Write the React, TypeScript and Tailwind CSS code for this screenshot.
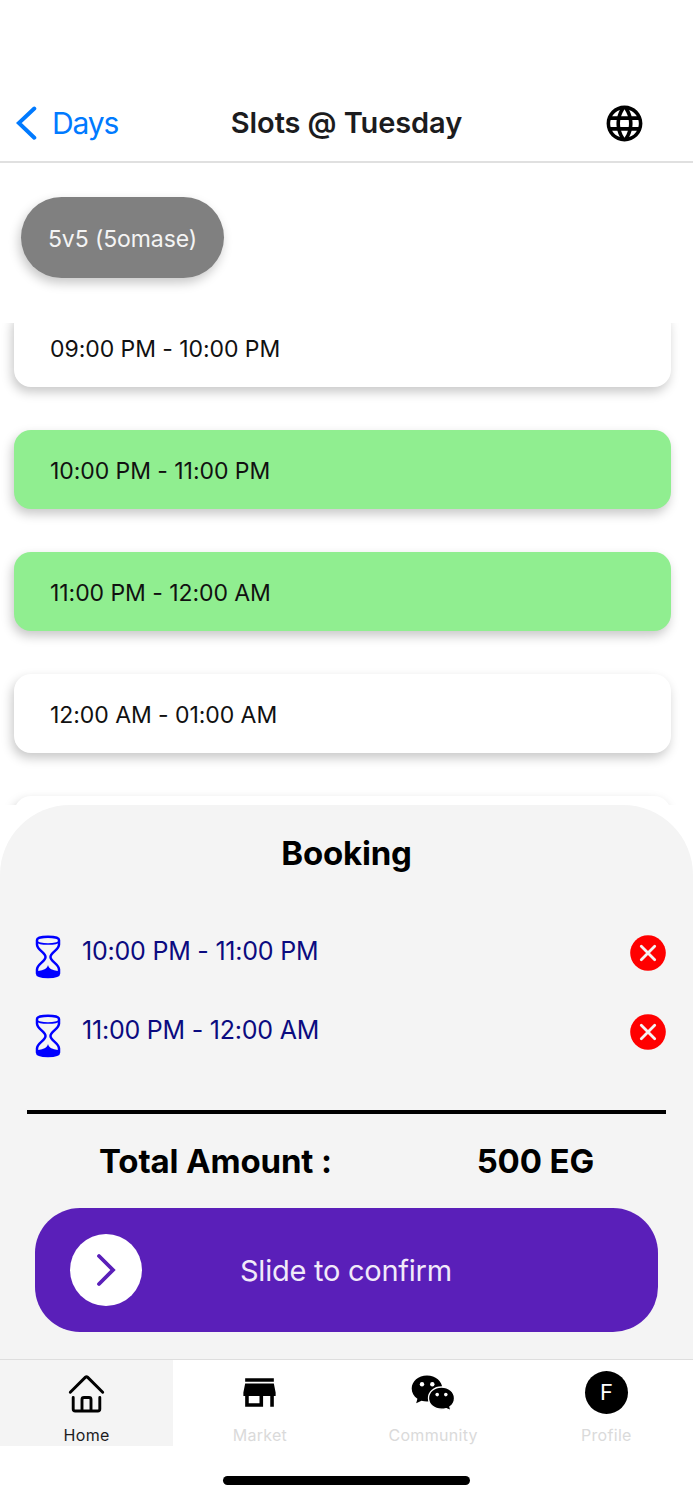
import React from "react";
import { MdLanguage, MdStore } from "react-icons/md";

type Slot = {
    label: string;
    selected: boolean;
};

const slots: Slot[] = [
    { label: "09:00 PM - 10:00 PM", selected: false },
    { label: "10:00 PM - 11:00 PM", selected: true },
    { label: "11:00 PM - 12:00 AM", selected: true },
    { label: "12:00 AM - 01:00 AM", selected: false },
    { label: "", selected: false },
];

const HourglassIcon = () => (
    <svg width="28" height="44" viewBox="0 0 28 44" fill="none">
        <path
            d="M3 5C3 .8 25 .8 25 5V9.500c0 5.500-8.500 8-8.500 12.500s8.500 7 8.500 12.500v4c0 4.700-22 4.700-22 0v-4c0-5.500 8.500-8 8.500-12.500S3 15 3 9.500Z"
            stroke="#0000ff"
            strokeWidth="2.500"
            strokeLinejoin="round"
        />
        <path d="M3 6.500C5 9.800 23 9.800 25 6.500" stroke="#0000ff" strokeWidth="1.600" />
        <path
            d="M14 30c.7 3.300 3 4 6 5.300l5 1v2.200c0 4.200-22 4.200-22 0v-2.200l5-1c3-1.300 5.300-2 6-5.300Z"
            fill="#0000ff"
        />
    </svg>
);

const RemoveIcon = () => (
    <svg width="36" height="36" viewBox="0 0 36 36" fill="none">
        <circle cx="18" cy="18" r="17.800" fill="#ff0000" />
        <path
            d="m11.300 11.300 13.400 13.400m0-13.400L11.300 24.700"
            stroke="#f4f4f4"
            strokeWidth="2.800"
            strokeLinecap="round"
        />
    </svg>
);

const HomeIcon = () => (
    <svg
        width="38"
        height="40"
        viewBox="0 0 38 40"
        fill="none"
        stroke="#000"
        strokeWidth="2.900"
        strokeLinecap="round"
        strokeLinejoin="round"
    >
        <path d="M2.300 19.300 17.500 4.100q1-.9 2 0l15.200 15.200" />
        <path d="M5.200 24.500V36q0 2 2 2h22.600q2 0 2-2V24.500" />
        <path d="M14 37.500v-11q0-2 2-2h5q2 0 2 2v11" />
    </svg>
);

const ChatIcon = () => (
    <svg width="44" height="36" viewBox="0 0 44 36">
        <path
            d="M16 .5C7.300.5.7 6.300.7 13.500c0 4.200 2.100 7.800 5.700 10.200L5.200 28.200l5.300-2.500c1.700.5 3.600.7 5.500.7 8.500 0 15.300-5.700 15.300-12.900S24.500.5 16 .5Z"
            fill="#000"
        />
        <path
            d="M30.500 12c7.200 0 13 4.900 13 11.200 0 3.500-1.700 6.500-4.600 8.600l1 3.900-4.600-2.100c-1.500.4-3.100.6-4.800.6-7.300 0-13-4.800-13-11S23.200 12 30.500 12Z"
            fill="#000"
            stroke="#fff"
            strokeWidth="1.300"
        />
        <circle cx="11" cy="9.300" r="2.200" fill="#fff" />
        <circle cx="21.300" cy="9.300" r="2.200" fill="#fff" />
        <circle cx="26.200" cy="19.600" r="1.800" fill="#fff" />
        <circle cx="34.800" cy="19.600" r="1.800" fill="#fff" />
    </svg>
);

const Header = () => (
    <header className="h-[163px] shrink-0 pt-[84px] border-b-2 border-[#e0e0e0] grid grid-cols-3">
        <button className="h-[78px] pl-4 flex items-center text-[#007aff] text-[30px]">
            <svg width="22" height="36" viewBox="0 0 22 36" fill="none">
                <path
                    d="M18.300 3.500 2.800 18l15.500 14.700"
                    stroke="#007aff"
                    strokeWidth="4"
                    strokeLinecap="round"
                />
            </svg>
            <span className="ml-[14px] tracking-[-1.1px]">Days</span>
        </button>
        <h1 className="h-[78px] flex items-center justify-center whitespace-nowrap text-[29px] font-semibold tracking-[-0.1px] text-[#1c1c1e]">
            Slots @ Tuesday
        </h1>
        <div className="h-[78px] pr-[47px] flex items-center justify-end">
            <MdLanguage size={43} color="#000" />
        </div>
    </header>
);

const SlotCard = ({ label, selected }: Slot) => (
    <div
        className={`h-[79px] shrink-0 rounded-[17px] pt-[3px] pl-9 flex items-center text-[23px] tracking-[-0.06px] text-[#111] shadow-[-2px_5px_11px_rgba(0,0,0,0.22)] ${
            selected ? "bg-[#90ee90]" : "bg-white"
        }`}
    >
        {label}
    </div>
);

const BookingRow = ({ label }: { label: string }) => (
    <div className="h-[79px] pl-[34px] pr-[27px] flex items-start">
        <HourglassIcon />
        <span className="ml-5 mt-[-2px] leading-9 text-[25px] tracking-[-0.22px] text-[#0b0b80]">
            {label}
        </span>
        <button className="ml-auto">
            <RemoveIcon />
        </button>
    </div>
);

const Booking = () => (
    <section className="h-[554px] shrink-0 rounded-t-[70px] bg-[#f4f4f4] pt-[26px]">
        <h2 className="h-11 leading-[44px] text-center text-[33px] font-bold tracking-[-0.2px] text-black">
            Booking
        </h2>
        <div className="mt-[60px]">
            {slots
                .filter((slot) => slot.selected)
                .map((slot) => (
                    <BookingRow key={slot.label} label={slot.label} />
                ))}
        </div>
        <div className="mt-[17px] ml-[27px] mr-[27px] h-[4px] bg-black" />
        <div className="mt-[26px] pl-[99px] pr-[99px] h-11 flex items-center justify-between whitespace-nowrap text-[33px] font-bold tracking-[-0.15px] text-black">
            <span>Total Amount :</span>
            <span>500 EG</span>
        </div>
        <div className="mt-[24px] mx-[35px] h-[124px] rounded-[45px] bg-[#5a1fb9] pl-[35px] flex items-center">
            <div className="w-[72px] h-[72px] rounded-full bg-white flex items-center justify-center">
                <svg width="20" height="34" viewBox="0 0 20 34" fill="none">
                    <path
                        d="M3 3l14 14L3 31"
                        stroke="#5a1fb9"
                        strokeWidth="3.800"
                        strokeLinecap="round"
                    />
                </svg>
            </div>
            <span className="ml-[98px] pt-px text-[29px] tracking-[-0.25px] text-[#f1eaf9]">
                Slide to confirm
            </span>
        </div>
    </section>
);

const tabs = [
    { name: "Home", icon: <HomeIcon /> },
    { name: "Market", icon: <MdStore size={43} color="#000" /> },
    { name: "Community", icon: <ChatIcon /> },
    {
        name: "Profile",
        icon: (
            <div className="w-[43px] h-[43px] rounded-full bg-black text-white text-[22px] flex items-center justify-center">
                F
            </div>
        ),
    },
];

const TabBar = () => (
    <nav className="h-[87px] shrink-0 border-t border-[#dedede] grid grid-cols-4">
        {tabs.map((tab, i) => (
            <div
                key={tab.name}
                className={`pt-[11px] flex flex-col items-center ${
                    i === 0
                        ? "bg-[#f4f4f4] text-[#1c1c1e]"
                        : "bg-white text-[#dadada]"
                }`}
            >
                <div className="h-[43px] flex items-center justify-center">
                    {tab.icon}
                </div>
                <span className="mt-[11px] leading-5 text-[16px] tracking-[0.3px]">
                    {tab.name}
                </span>
            </div>
        ))}
    </nav>
);

const App = () => {
    return (
        <div className="w-[693px] h-[1500px] overflow-hidden bg-white flex flex-col font-['Inter',sans-serif]">
            <Header />
            <div className="h-[160px] shrink-0 pt-[34px] pl-[21px]">
                <button className="w-[203px] h-[81px] pt-[3px] rounded-full bg-[#808080] text-[#f4f4f4] text-[23px] tracking-[-0.1px] shadow-[-2px_5px_11px_rgba(0,0,0,0.22)]">
                    5v5 (5omase)
                </button>
            </div>
            <div className="h-[482px] shrink-0 overflow-hidden pl-[14px] pr-[22px]">
                <div className="mt-[-15px] flex flex-col gap-[43px]">
                    {slots.map((slot) => (
                        <SlotCard key={slot.label} {...slot} />
                    ))}
                </div>
            </div>
            <Booking />
            <TabBar />
            <div className="mt-[30px] w-[247px] h-[9px] shrink-0 rounded-full bg-black self-center" />
        </div>
    );
};

export default App;
